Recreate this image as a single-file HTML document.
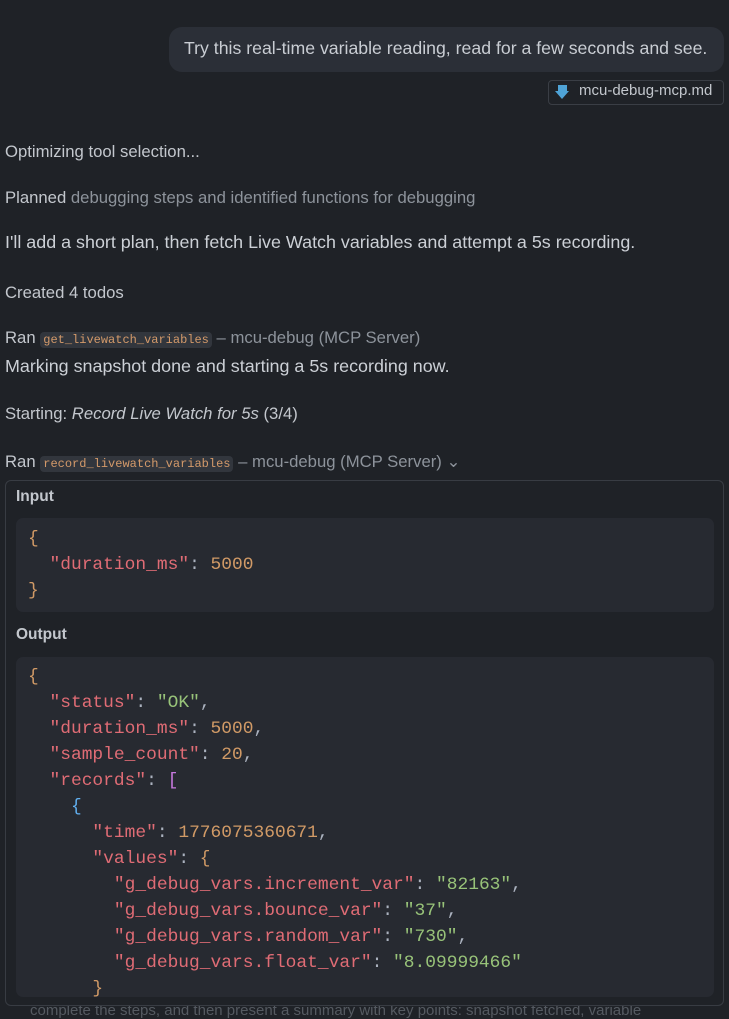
<!DOCTYPE html>
<html><head><meta charset="utf-8"><style>
*{margin:0;padding:0;box-sizing:border-box}
body{width:729px;height:1013px;background:#1f2227;overflow:hidden;position:relative;font-family:"Liberation Sans","DejaVu Sans",sans-serif;color:#ccd0d6}
.a{position:absolute;white-space:nowrap}
.t{font-size:16.7px;color:#c3c7cd}
.dim{color:#8d939b}
.c{font-family:"Liberation Mono",monospace;font-size:12px;color:#d49a6a;background:#32363d;border-radius:4px;padding:1px 3px}
.code{font-family:"Liberation Mono","DejaVu Sans Mono",monospace;font-size:17.9px;line-height:26px;white-space:pre;color:#abb2bf}
.k{color:#e06c75}.n{color:#d19a66}.s{color:#98c379}.p{color:#d19a66}.b{color:#c678dd}.y{color:#61afef}
</style></head><body>
<div class="a" style="left:169px;top:27px;width:555px;height:45px;background:#2b2f37;border-radius:13px"></div>
<div class="a" style="left:184px;top:38px;font-size:17.7px;color:#c9cdd3">Try this real-time variable reading, read for a few seconds and see.</div>
<div class="a" style="left:548px;top:80px;width:176px;height:25px;border:1px solid #3a3e45;border-radius:4px"></div>
<div class="a" style="left:558px;top:85px;width:9px;height:7px;background:#4fa3d6"></div>
<div class="a" style="left:555px;top:91px;width:0;height:0;border-left:7.5px solid transparent;border-right:7.5px solid transparent;border-top:8px solid #4fa3d6"></div>
<div class="a" style="left:579px;top:82px;font-size:15px;color:#c3c7cd">mcu-debug-mcp.md</div>

<div class="a t" style="left:5px;top:142px">Optimizing tool selection...</div>
<div class="a t" style="left:5px;top:188px">Planned <span class="dim">debugging steps and identified functions for debugging</span></div>
<div class="a" style="left:5px;top:232px;font-size:17.9px;color:#ccd0d6">I'll add a short plan, then fetch Live Watch variables and attempt a 5s recording.</div>
<div class="a t" style="left:5px;top:283px">Created 4 todos</div>
<div class="a t" style="left:5px;top:328px">Ran <span class="c">get_livewatch_variables</span> <span class="dim">– mcu-debug (MCP Server)</span></div>
<div class="a" style="left:5px;top:356px;font-size:17.9px;color:#ccd0d6">Marking snapshot done and starting a 5s recording now.</div>
<div class="a t" style="left:5px;top:404px">Starting: <i>Record Live Watch for 5s</i> (3/4)</div>
<div class="a t" style="left:5px;top:451px">Ran <span class="c">record_livewatch_variables</span> <span class="dim">– mcu-debug (MCP Server) ⌄</span></div>

<div class="a" style="left:30px;top:1002px;font-size:15px;color:#555a61">complete the steps, and then present a summary with key points: snapshot fetched, variable</div>
<div class="a" style="left:5px;top:480px;width:719px;height:526px;border:1px solid #383c43;border-radius:6px;background:#1f2227;overflow:hidden">
 <div class="a" style="left:10px;top:7px;font-size:15.5px;font-weight:bold;color:#c3c7cd">Input</div>
 <div class="a" style="left:10px;top:37px;width:698px;height:94px;background:#272a31;border-radius:7px"></div>
 <div class="a code" style="left:22px;top:45px"><span class="p">{</span>
  <span class="k">"duration_ms"</span>: <span class="n">5000</span>
<span class="p">}</span></div>
 <div class="a" style="left:10px;top:145px;font-size:15.5px;font-weight:bold;color:#c3c7cd">Output</div>
 <div class="a" style="left:10px;top:176px;width:698px;height:340px;background:#272a31;border-radius:7px;overflow:hidden">
 <div class="a code" style="left:12px;top:7px"><span class="p">{</span>
  <span class="k">"status"</span>: <span class="s">"OK"</span>,
  <span class="k">"duration_ms"</span>: <span class="n">5000</span>,
  <span class="k">"sample_count"</span>: <span class="n">20</span>,
  <span class="k">"records"</span>: <span class="b">[</span>
    <span class="y">{</span>
      <span class="k">"time"</span>: <span class="n">1776075360671</span>,
      <span class="k">"values"</span>: <span class="p">{</span>
        <span class="k">"g_debug_vars.increment_var"</span>: <span class="s">"82163"</span>,
        <span class="k">"g_debug_vars.bounce_var"</span>: <span class="s">"37"</span>,
        <span class="k">"g_debug_vars.random_var"</span>: <span class="s">"730"</span>,
        <span class="k">"g_debug_vars.float_var"</span>: <span class="s">"8.09999466"</span>
      <span class="p">}</span></div>
 </div>
</div>
</body></html>
